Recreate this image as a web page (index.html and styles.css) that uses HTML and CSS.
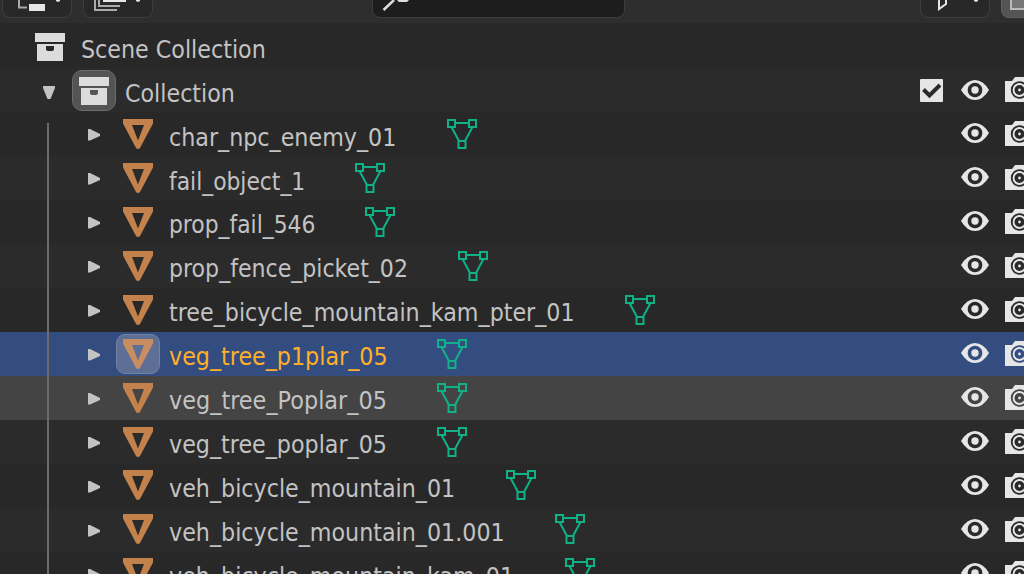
FILE: index.html
```html
<!DOCTYPE html>
<html lang="en">
<head>
<meta charset="utf-8">
<title>Outliner</title>
<link rel="stylesheet" href="styles.css">
</head>
<body>
<svg class="defs" aria-hidden="true">
  <symbol id="collection" viewBox="0 0 30 28"><path fill="#dcdcdc" fill-rule="evenodd" d="M0 0h30v9H0zM2 11h26v17H2zM11 13v3q0 2 2 2h4q2 0 2-2v-3z"/></symbol>
  <symbol id="object" viewBox="0 0 32 32"><path fill="currentColor" fill-rule="evenodd" d="M1 1h30v4.500L18.500 29q-.5 2-2.500 2t-2.500-2L1 5.500zM10 7L16 22.500L22 7z"/></symbol>
  <symbol id="mesh" viewBox="0 0 30 30"><path fill="none" stroke="#11b187" stroke-width="2" d="M1 1h7v7H1zM22 1h7v7h-7zM11.500 22h7v7h-7zM8 4h14M4.500 8L12 22M25.500 8L18 22"/></symbol>
  <symbol id="eye" viewBox="0 0 28 22"><path fill="#e6e6e6" fill-rule="evenodd" d="M0 11Q6 1 14 1T28 11Q22 21 14 21T0 11M14 3.700a7.300 7.300 0 1 0 .01 0z"/><circle cx="14" cy="11" r="3.700" fill="#e6e6e6"/></symbol>
  <symbol id="camera" viewBox="0 0 30 25"><path fill="#e6e6e6" d="M0 4h7l3-4h10l3 4h7v21H0z"/><g fill="none" stroke="var(--row)"><circle cx="14.500" cy="13" r="7.800" stroke-width="1.800"/><circle cx="14.500" cy="13" r="3.200" stroke-width="3.600"/></g></symbol>
  <symbol id="right" viewBox="0 0 12 12"><path fill="#c3c3c3" d="M0 0h2l10 5v2L2 11.500H0z"/></symbol>
</svg>
<main class="outliner">
  <header class="toolbar">
    <div class="button display"><svg viewBox="0 0 70 18"><path fill="none" stroke="#aaa" stroke-width="2" d="M16 0v7.500h8"/><path fill="#e6e6e6" d="M26 4h16v7H26zM53 0h4v1l-2 1-2-1z"/></svg></div>
    <div class="button layers"><svg viewBox="0 0 70 18"><path fill="none" stroke="#aaa" stroke-width="2" d="M11 0v10h22M15 0v6h21"/><path fill="#e6e6e6" d="M19 0h23v2H19zM52 0h4v1l-2 1-2-1z"/></svg></div>
    <div class="search"><svg viewBox="0 0 40 18"><path fill="none" stroke="#ddd" stroke-width="2.500" d="M10.500 10L21 0"/><path fill="#ddd" d="M24 0h12l-2 2h-8z"/></svg></div>
    <div class="button filter"><svg viewBox="0 0 70 18"><path fill="none" stroke="#e6e6e6" stroke-width="2" d="M18 0v9l7-5V0"/><path fill="#e6e6e6" d="M53 0h4v1l-2 1-2-1z"/></svg></div>
    <div class="button add"><svg viewBox="0 0 40 18"><path fill="#777" stroke="#bbb" stroke-width="2" d="M9 0v9h30V0"/></svg></div>
  </header>
  <section class="tree">
    <div class="row scene"><svg class="box"><use href="#collection"/></svg><span class="label">Scene Collection</span></div>
    <div class="row root"><svg class="down" viewBox="0 0 12 13"><path fill="#c3c3c3" d="M0 0h12v2L7.500 13h-3L0 2z"/></svg><span class="badge"><svg class="box"><use href="#collection"/></svg></span><span class="label">Collection</span><span class="toggles"><svg class="check" viewBox="0 0 23 23"><rect width="23" height="23" rx="1" fill="#e6e6e6"/><path fill="none" stroke="#2b2b2b" stroke-width="4" d="M3.500 10.500l6 6L20 6"/></svg><svg class="eye"><use href="#eye"/></svg><svg class="camera"><use href="#camera"/></svg></span></div>
    <div class="children">
      <div class="row item"><svg class="right"><use href="#right"/></svg><span class="type"><svg><use href="#object"/></svg></span><span class="label" style="width:278px">char_npc_enemy_01</span><svg class="mesh"><use href="#mesh"/></svg><span class="toggles"><svg class="eye"><use href="#eye"/></svg><svg class="camera"><use href="#camera"/></svg></span></div>
      <div class="row item"><svg class="right"><use href="#right"/></svg><span class="type"><svg><use href="#object"/></svg></span><span class="label tight" style="width:186px">fail_object_1</span><svg class="mesh"><use href="#mesh"/></svg><span class="toggles"><svg class="eye"><use href="#eye"/></svg><svg class="camera"><use href="#camera"/></svg></span></div>
      <div class="row item"><svg class="right"><use href="#right"/></svg><span class="type"><svg><use href="#object"/></svg></span><span class="label tight" style="width:196px">prop_fail_546</span><svg class="mesh"><use href="#mesh"/></svg><span class="toggles"><svg class="eye"><use href="#eye"/></svg><svg class="camera"><use href="#camera"/></svg></span></div>
      <div class="row item"><svg class="right"><use href="#right"/></svg><span class="type"><svg><use href="#object"/></svg></span><span class="label even" style="width:289px">prop_fence_picket_02</span><svg class="mesh"><use href="#mesh"/></svg><span class="toggles"><svg class="eye"><use href="#eye"/></svg><svg class="camera"><use href="#camera"/></svg></span></div>
      <div class="row item"><svg class="right"><use href="#right"/></svg><span class="type"><svg><use href="#object"/></svg></span><span class="label" style="width:456px">tree_bicycle_mountain_kam_pter_01</span><svg class="mesh"><use href="#mesh"/></svg><span class="toggles"><svg class="eye"><use href="#eye"/></svg><svg class="camera"><use href="#camera"/></svg></span></div>
      <div class="row item active"><svg class="right"><use href="#right"/></svg><span class="type"><svg><use href="#object"/></svg></span><span class="label" style="width:268px">veg_tree_p1plar_05</span><svg class="mesh"><use href="#mesh"/></svg><span class="toggles"><svg class="eye"><use href="#eye"/></svg><svg class="camera"><use href="#camera"/></svg></span></div>
      <div class="row item hover"><svg class="right"><use href="#right"/></svg><span class="type"><svg><use href="#object"/></svg></span><span class="label wide" style="width:268px">veg_tree_Poplar_05</span><svg class="mesh"><use href="#mesh"/></svg><span class="toggles"><svg class="eye"><use href="#eye"/></svg><svg class="camera"><use href="#camera"/></svg></span></div>
      <div class="row item"><svg class="right"><use href="#right"/></svg><span class="type"><svg><use href="#object"/></svg></span><span class="label" style="width:268px">veg_tree_poplar_05</span><svg class="mesh"><use href="#mesh"/></svg><span class="toggles"><svg class="eye"><use href="#eye"/></svg><svg class="camera"><use href="#camera"/></svg></span></div>
      <div class="row item"><svg class="right"><use href="#right"/></svg><span class="type"><svg><use href="#object"/></svg></span><span class="label" style="width:337px">veh_bicycle_mountain_01</span><svg class="mesh"><use href="#mesh"/></svg><span class="toggles"><svg class="eye"><use href="#eye"/></svg><svg class="camera"><use href="#camera"/></svg></span></div>
      <div class="row item"><svg class="right"><use href="#right"/></svg><span class="type"><svg><use href="#object"/></svg></span><span class="label" style="width:386px">veh_bicycle_mountain_01.001</span><svg class="mesh"><use href="#mesh"/></svg><span class="toggles"><svg class="eye"><use href="#eye"/></svg><svg class="camera"><use href="#camera"/></svg></span></div>
      <div class="row item"><svg class="right"><use href="#right"/></svg><span class="type"><svg><use href="#object"/></svg></span><span class="label" style="width:396px">veh_bicycle_mountain_kam_01</span><svg class="mesh"><use href="#mesh"/></svg><span class="toggles"><svg class="eye"><use href="#eye"/></svg><svg class="camera"><use href="#camera"/></svg></span></div>
    </div>
  </section>
</main>
</body>
</html>
```
FILE: styles.css
```css
* { box-sizing: border-box; }
body { margin: 0; background: #282828; font: 24px/44px "DejaVu Sans", sans-serif; color: #c3c3c3; }
.defs { position: absolute; width: 0; height: 0; }
.outliner { width: 1024px; height: 574px; overflow: hidden; }
.toolbar { display: flex; align-items: flex-start; height: 23px; background: #2e2e2e; padding-left: 2px; }
.button, .search { flex: none; height: 18px; width: 70px; border: 1px solid #3d3d3d; border-top: 0; border-radius: 0 0 8px 8px; background: #282828; overflow: hidden; }
.button svg, .search svg { display: block; height: 18px; }
.layers { margin-left: 11px; }
.search { width: 253px; margin-left: 219px; background: #1d1d1d; }
.filter { margin-left: 295px; }
.add { margin-left: 11px; background: #545454; border-color: #606060; }
.tree { padding-top: 1px; }
.row { --row: #282828; display: flex; align-items: flex-start; height: 44px; background: var(--row); white-space: nowrap; }
.root, .item:nth-child(even) { --row: #2b2b2b; }
.row svg { display: block; flex: none; }
.label { flex: none; transform: scaleX(.926); transform-origin: left; padding-top: 4px; }
.label.tight { transform: scaleX(.91); }
.label.even { transform: scaleX(.92); }
.label.wide { transform: scaleX(.932); }
.item:nth-child(n+3) .label { padding-top: 3px; }
.box { width: 30px; height: 28px; }
.scene { padding-left: 35px; }
.scene .box { margin: 9px 16px 0 0; }
.root { padding-left: 43px; }
.down { width: 12px; height: 13px; margin-top: 18px; }
.badge { width: 44px; height: 41px; margin: 2px 9px 0 17px; padding: 6px; border: 1px solid #6b6b6b; border-radius: 10px; background: #545454; }
.children { position: relative; }
.children::before { content: ""; position: absolute; z-index: 1; left: 47px; top: 11px; width: 2px; height: 460px; background: #6b6b6b; }
.item { padding-left: 88px; }
.right { width: 12px; height: 12px; margin-top: 17px; }
.type { flex: none; width: 44px; height: 40px; margin: 2px 9px 0 16px; padding: 3px 5px; border: 1px solid transparent; border-radius: 9px; color: #c3824b; }
.type svg { width: 32px; height: 32px; }
.mesh { width: 30px; height: 30px; margin-top: 7px; }
.item:nth-child(n+9) .mesh { margin-top: 6px; }
.item:nth-child(n+9) .type { padding-top: 2px; }
.toggles { display: flex; flex: none; width: 107px; margin-left: auto; padding-left: 44px; }
.root .toggles { padding-left: 3px; }
.check { width: 23px; height: 23px; margin: 11px 18px 0 0; }
.eye { width: 28px; height: 22px; margin-top: 11px; }
.item .eye { margin-top: 10px; }
.camera { width: 30px; height: 25px; margin: 9px 0 0 16px; }
.item.active { --row: #334d80; }
.active .label { color: #ffaf29; }
.active .type { color: #c98d62; background: #5d6f95; border-color: #7182a4; }
.item.hover { --row: #444; }
```
